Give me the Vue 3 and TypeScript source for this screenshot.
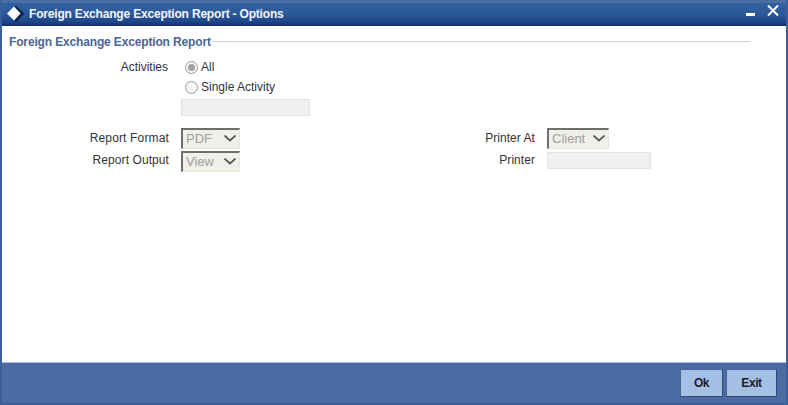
<script setup lang="ts">
const title = 'Foreign Exchange Exception Report - Options'
const section = 'Foreign Exchange Exception Report'
</script>

<template>
  <div class="window">
    <header class="titlebar">
      <svg class="logo" width="18" height="16" viewBox="0 0 18 16">
        <path d="M9 0 L17.5 7.5 L10 15.5 L7 15.5 L13 7.5 L7 0 Z" fill="#0c2450" />
        <path d="M7 0.5 L13.5 7.5 L7 14.5 L0 7.5 Z" fill="#ffffff" />
      </svg>
      <span class="title">{{ title }}</span>
      <svg class="minimize" width="9" height="3" viewBox="0 0 9 3"><rect width="9" height="3" fill="#fff" /></svg>
      <svg class="close" width="12" height="11" viewBox="0 0 12 11">
        <path d="M1 0.5 L11 10.5 M11 0.5 L1 10.5" stroke="#fff" stroke-width="2" fill="none" />
      </svg>
    </header>

    <main class="content">
      <div class="legend">
        <span class="legend-text">{{ section }}</span>
        <span class="legend-line"></span>
      </div>

      <div class="activities">
        <span class="label activities-label">Activities</span>
        <div class="choices">
          <label class="radio-row">
            <span class="radio checked"><span class="dot"></span></span>All
          </label>
          <label class="radio-row second">
            <span class="radio"></span>Single Activity
          </label>
          <div class="field activity-field"></div>
        </div>
      </div>

      <div class="columns">
        <div class="col">
          <div class="row">
            <span class="label wide">Report Format</span>
            <div class="select s58"><span>PDF</span><svg width="12" height="7" viewBox="0 0 12 7"><path d="M0.5 0.5 L6 5.5 L11.5 0.5" fill="none" stroke="#555" stroke-width="1.7" /></svg></div>
          </div>
          <div class="row">
            <span class="label wide">Report Output</span>
            <div class="select s58"><span>View</span><svg width="12" height="7" viewBox="0 0 12 7"><path d="M0.5 0.5 L6 5.5 L11.5 0.5" fill="none" stroke="#555" stroke-width="1.7" /></svg></div>
          </div>
        </div>
        <div class="col right">
          <div class="row">
            <span class="label narrow">Printer At</span>
            <div class="select s62"><span>Client</span><svg width="12" height="7" viewBox="0 0 12 7"><path d="M0.5 0.5 L6 5.5 L11.5 0.5" fill="none" stroke="#555" stroke-width="1.7" /></svg></div>
          </div>
          <div class="row">
            <span class="label narrow">Printer</span>
            <div class="field printer-field"></div>
          </div>
        </div>
      </div>
    </main>

    <footer class="footer">
      <button class="btn">Ok</button>
      <button class="btn">Exit</button>
    </footer>
  </div>
</template>

<style>
html, body { margin: 0; padding: 0; }
</style>

<style scoped>
.window {
  width: 788px;
  height: 405px;
  box-sizing: border-box;
  display: flex;
  flex-direction: column;
  background: #3b5f99;
  padding: 0 2px 2px;
  font-family: "Liberation Sans", Arial, sans-serif;
  font-size: 12px;
  color: #333;
  overflow: hidden;
}
.titlebar {
  height: 26px;
  flex: none;
  box-sizing: border-box;
  display: flex;
  align-items: flex-start;
  background: linear-gradient(#30609f 0%, #2d5a9c 45%, #1f4688 85%, #16356f 100%);
  border-top: 3px solid #4a6ea6;
  border-bottom: 1px solid #12305f;
  padding: 0 7px 0 5px;
  color: #fff;
}
.logo { flex: none; margin-top: 3px; }
.title {
  margin-left: 4px;
  font-size: 12px;
  font-weight: bold;
  letter-spacing: -0.19px;
  color: #f2f5fa;
  flex: 1;
  align-self: center;
}
.minimize { margin-right: 12px; margin-top: 10px; }
.close { margin-top: 2px; }
.content {
  flex: 1;
  background: #fff;
  min-height: 0;
  padding-top: 9px;
}
.legend {
  display: flex;
  align-items: center;
  margin-left: 7px;
  width: 741px;
}
.legend-text {
  font-size: 12px;
  font-weight: bold;
  letter-spacing: -0.15px;
  color: #4a6693;
}
.legend-line {
  flex: 1;
  height: 1px;
  background: #c9d3e0;
  margin-left: 2px;
  margin-bottom: 2px;
}
.label { text-align: right; }
.activities {
  display: flex;
  margin-top: 11px;
}
.activities-label { width: 166px; line-height: 14px; }
.choices { margin-left: 13px; }
.radio-row {
  display: flex;
  align-items: center;
  height: 14px;
  margin-left: 4px;
}
.radio-row.second { margin-top: 6px; }
.radio {
  width: 11px;
  height: 11px;
  border: 1px solid #9a9a9a;
  border-radius: 50%;
  background: #f6f6f6;
  display: flex;
  align-items: center;
  justify-content: center;
  margin-right: 3px;
}
.dot { width: 7px; height: 7px; border-radius: 50%; background: #a0a0a0; }
.field {
  box-sizing: border-box;
  background: #f0f0f0;
  border: 1px solid #e2e2e2;
  height: 17px;
}
.activity-field { width: 129px; margin-top: 5px; }
.columns {
  display: flex;
  margin-top: 11px;
}
.col { display: flex; flex-direction: column; gap: 1px; }
.col.right { margin-left: 232px; }
.row { display: flex; align-items: center; height: 22px; }
.wide { width: 167px; margin-right: 12px; letter-spacing: 0.15px; }
.row + .row .wide { letter-spacing: 0.08px; }
.narrow { width: 63px; margin-right: 12px; letter-spacing: 0.05px; }
.row .label { margin-bottom: 1px; }
.row + .row .label { margin-bottom: 3px; }
.printer-field { width: 104px; margin-bottom: 2px; }
.select {
  box-sizing: border-box;
  height: 21px;
  display: flex;
  align-items: center;
  justify-content: space-between;
  background: #f0efe9;
  border-top: 2px solid #6e6e6e;
  border-left: 2px solid #6e6e6e;
  border-right: 1px solid #e8e6dd;
  border-bottom: 1px solid #e8e6dd;
  padding: 0 3px 0 3px;
  color: #a0a0a0;
  font-size: 13px;
}
.s58 { width: 59px; }
.s62 { width: 62px; }
.footer {
  flex: none;
  height: 41px;
  box-sizing: border-box;
  background: #4b6ba2;
  border-top: 1px solid #a9bfdf;
  display: flex;
  justify-content: flex-end;
  align-items: flex-start;
  gap: 3px;
  padding: 6px 9px 0 0;
}
.btn {
  width: 43px;
  height: 28px;
  padding: 0;
  font-family: inherit;
  font-size: 12px;
  font-weight: bold;
  letter-spacing: -0.4px;
  color: #1c1c1c;
  background: #a4c0e4;
  border: 1px solid #466494;
  border-right-color: #2e4a78;
  border-bottom-color: #2e4a78;
}
.btn + .btn { width: 51px; }
</style>
